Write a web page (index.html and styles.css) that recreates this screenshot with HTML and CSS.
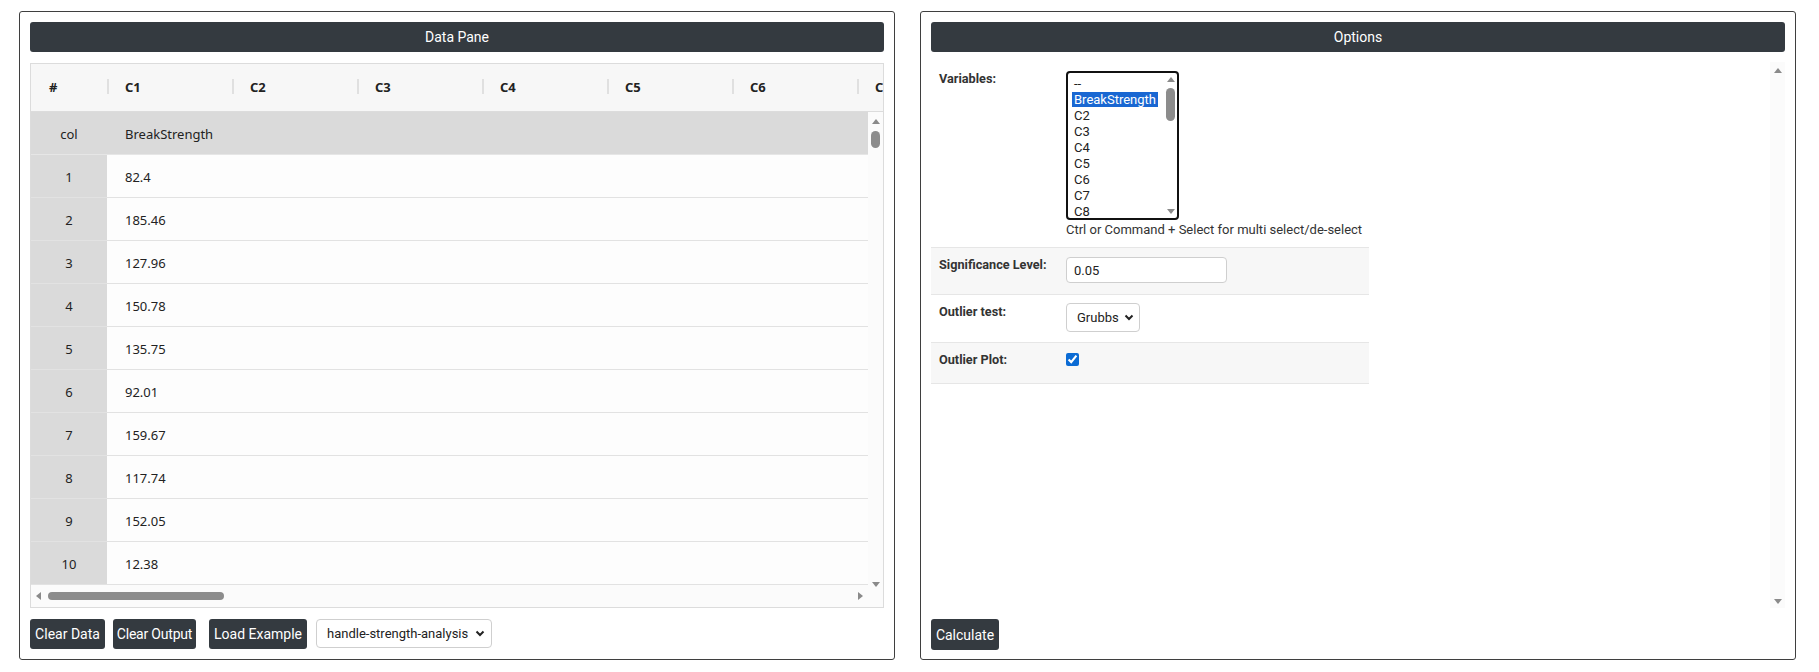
FILE: index.html
```html
<!DOCTYPE html>
<html lang="en">
<head>
<meta charset="utf-8">
<title>Outlier Test</title>
<link rel="stylesheet" href="styles.css">
</head>
<body>
<div class="page">
  <section class="panel">
    <div class="panel-head">Data Pane</div>
    <div class="grid-frame">
      <div class="grid-head">
        <div class="hcell idx">#</div>
        <div class="hcell">C1</div>
        <div class="hcell">C2</div>
        <div class="hcell">C3</div>
        <div class="hcell">C4</div>
        <div class="hcell">C5</div>
        <div class="hcell">C6</div>
        <div class="hcell">C7</div>
      </div>
      <div class="grid-body">
        <div class="rows">
          <div class="row labels"><div class="cell idx">col</div><div class="cell val">BreakStrength</div></div>
          <div class="row"><div class="cell idx">1</div><div class="cell val">82.4</div></div>
          <div class="row"><div class="cell idx">2</div><div class="cell val">185.46</div></div>
          <div class="row"><div class="cell idx">3</div><div class="cell val">127.96</div></div>
          <div class="row"><div class="cell idx">4</div><div class="cell val">150.78</div></div>
          <div class="row"><div class="cell idx">5</div><div class="cell val">135.75</div></div>
          <div class="row"><div class="cell idx">6</div><div class="cell val">92.01</div></div>
          <div class="row"><div class="cell idx">7</div><div class="cell val">159.67</div></div>
          <div class="row"><div class="cell idx">8</div><div class="cell val">117.74</div></div>
          <div class="row"><div class="cell idx">9</div><div class="cell val">152.05</div></div>
          <div class="row"><div class="cell idx">10</div><div class="cell val">12.38</div></div>
        </div>
        <div class="vbar">
          <span class="arr up"></span>
          <span class="vthumb"></span>
          <span class="spacer"></span>
          <span class="arr down"></span>
        </div>
        <div class="hbar">
          <span class="arr left"></span>
          <span class="hthumb"></span>
          <span class="spacer"></span>
          <span class="arr right"></span>
        </div>
      </div>
    </div>
    <div class="panel-foot">
      <button class="btn b-data">Clear Data</button>
      <button class="btn b-out">Clear Output</button>
      <button class="btn b-ex">Load Example</button>
      <div class="select example">
        <span>handle-strength-analysis</span>
        <svg class="chev" width="10" height="7" viewBox="0 0 10 7"><polyline points="1.5,1.5 5,5 8.5,1.5" fill="none" stroke="#222" stroke-width="2"/></svg>
      </div>
    </div>
  </section>

  <section class="panel">
    <div class="panel-head">Options</div>
    <div class="options-scroll">
      <div class="options">
        <div class="form">
          <div class="frow">
            <div class="flabel">Variables:</div>
            <div class="fctrl vars">
              <div class="listbox" role="listbox">
                <div class="items">
                  <div class="opt">--</div>
                  <div class="opt"><span class="sel">BreakStrength</span></div>
                  <div class="opt">C2</div>
                  <div class="opt">C3</div>
                  <div class="opt">C4</div>
                  <div class="opt">C5</div>
                  <div class="opt">C6</div>
                  <div class="opt">C7</div>
                  <div class="opt">C8</div>
                </div>
                <div class="lbar">
                  <span class="arr up"></span>
                  <span class="lthumb"></span>
                  <span class="spacer"></span>
                  <span class="arr down"></span>
                </div>
              </div>
              <div class="help">Ctrl or Command + Select for multi select/de-select</div>
            </div>
          </div>
          <div class="frow alt">
            <div class="flabel">Significance Level:</div>
            <div class="fctrl sig">
              <div class="input">0.05</div>
            </div>
          </div>
          <div class="frow">
            <div class="flabel">Outlier test:</div>
            <div class="fctrl test">
              <div class="select grubbs">
                <span>Grubbs</span>
                <svg class="chev" width="10" height="7" viewBox="0 0 10 7"><polyline points="1.5,1.5 5,5 8.5,1.5" fill="none" stroke="#222" stroke-width="2"/></svg>
              </div>
            </div>
          </div>
          <div class="frow alt last">
            <div class="flabel">Outlier Plot:</div>
            <div class="fctrl plot">
              <input type="checkbox" class="check" checked>
            </div>
          </div>
        </div>
      </div>
      <div class="obar">
        <span class="arr up"></span>
        <span class="spacer"></span>
        <span class="arr down"></span>
      </div>
    </div>
    <div class="panel-foot">
      <button class="btn calc">Calculate</button>
    </div>
  </section>
</div>
</body>
</html>
```

FILE: styles.css
```css
* { box-sizing: border-box; }
html, body { margin: 0; padding: 0; background: #fff; }
body {
  font-family: Roboto, "Liberation Sans", Arial, sans-serif;
  color: #333;
}
.page {
  display: flex;
  gap: 25px;
  padding: 11px 23px 12px 19px;
  height: 672px;
}
.panel {
  flex: 1;
  min-width: 0;
  border: 1px solid #3f3f3f;
  border-radius: 3px;
  padding: 10px;
  display: flex;
  flex-direction: column;
  gap: 11px;
}
.panel-head {
  flex: none;
  height: 30px;
  background: #343a40;
  color: #fff;
  border-radius: 3px;
  font-size: 14px;
  display: flex;
  align-items: center;
  justify-content: center;
}

/* data grid */
.grid-frame {
  flex: 1;
  min-height: 0;
  border: 1px solid #dcdcdc;
  display: flex;
  flex-direction: column;
  font-family: "Noto Sans", "Open Sans", sans-serif;
  font-size: 13px;
  color: #222;
}
.grid-head {
  flex: none;
  height: 48px;
  background: #f7f7f7;
  border-bottom: 1px solid #dcdcdc;
  display: flex;
  overflow: hidden;
  font-weight: 700;
  padding-bottom: 2px;
}
.hcell {
  flex: none;
  width: 125px;
  display: flex;
  align-items: center;
  padding-left: 18px;
  background: linear-gradient(#e0e0e0, #e0e0e0) left center / 2px 15px no-repeat;
}
.hcell.idx {
  width: 76px;
  padding-left: 18px;
  background: none;
}
.grid-body {
  flex: 1;
  min-height: 0;
  display: grid;
  grid-template-columns: 1fr 15px;
  grid-template-rows: 1fr 22px;
}
.rows {
  overflow: hidden;
  background: #fdfdfd;
}
.row {
  display: flex;
  height: 43px;
}
.cell {
  display: flex;
  align-items: center;
  padding-top: 2px;
}
.cell.idx {
  flex: none;
  width: 76px;
  justify-content: center;
  background: #dadada;
  border-bottom: 1px solid #e2e2e2;
}
.cell.val {
  flex: 1;
  padding-left: 18px;
  background: #fdfdfd;
  border-bottom: 1px solid #e2e2e2;
}
.row.labels .cell { background: #dadada; border-bottom: 1px solid #e6e6e6; }

.arr { flex: none; width: 0; height: 0; display: block; }
.arr.up { border-left: 4px solid transparent; border-right: 4px solid transparent; border-bottom: 5px solid #8a8a8a; }
.arr.down { border-left: 4px solid transparent; border-right: 4px solid transparent; border-top: 5px solid #8a8a8a; }
.arr.left { border-top: 4px solid transparent; border-bottom: 4px solid transparent; border-right: 5px solid #8a8a8a; }
.arr.right { border-top: 4px solid transparent; border-bottom: 4px solid transparent; border-left: 5px solid #8a8a8a; }
.spacer { flex: 1; }

.vbar {
  grid-column: 2;
  grid-row: 1 / 3;
  display: flex;
  flex-direction: column;
  align-items: center;
  padding: 7px 0 20px;
  background: #fbfbfb;
}
.vthumb {
  margin-top: 7px;
  width: 9px;
  height: 17px;
  border-radius: 5px;
  background: #8c8c8c;
}
.hbar {
  grid-column: 1;
  grid-row: 2;
  display: flex;
  align-items: center;
  padding: 0 5px 0 5px;
  background: #fbfbfb;
}
.hthumb {
  margin-left: 7px;
  width: 176px;
  height: 8px;
  border-radius: 4px;
  background: #8c8c8c;
}

/* footer */
.panel-foot {
  flex: none;
  height: 30px;
  display: flex;
  align-items: stretch;
  gap: 8px;
}
.btn {
  border: none;
  border-radius: 3px;
  background: #343a40;
  color: #fff;
  font-family: Roboto, "Liberation Sans", Arial, sans-serif;
  font-size: 14px;
  padding: 0;
  height: 30px;
  text-align: center;
  white-space: nowrap;
}
.b-data { width: 75px; }
.b-out { width: 83px; letter-spacing: -0.2px; }
.b-ex { width: 98px; margin-left: 5px; }
.select {
  display: flex;
  align-items: center;
  justify-content: space-between;
  border: 1px solid #cfcfcf;
  border-radius: 4px;
  background: #fff;
  font-size: 13px;
  color: #222;
  padding: 0 6px 0 10px;
}
.select.example {
  width: 176px;
  height: 29px;
  margin-left: 1px;
}
.chev { flex: none; }

/* options */
.options-scroll {
  flex: 1;
  min-height: 0;
  display: flex;
  margin-top: -1px;
}
.options { flex: 1; min-width: 0; }
.form { width: 438px; font-size: 13px; }
.frow {
  display: grid;
  grid-template-columns: 135px 1fr;
}
.frow + .frow { border-top: 1px solid #e6e6e6; }
.frow.last { border-bottom: 1px solid #e6e6e6; }
.frow.alt { background: #f7f7f7; }
.flabel {
  padding: 10px 8px 0;
  font-weight: 700;
  font-size: 12.7px;
  line-height: 14px;
  color: #333;
}
.fctrl.vars { padding: 9px 0 9px; }
.fctrl.sig { padding: 9px 0 11px; }
.fctrl.test { padding: 8px 0 10px; }
.fctrl.plot { padding: 10px 0 17px; height: 40px; }

.listbox {
  width: 113px;
  height: 149px;
  border: 2px solid #111;
  border-radius: 4px;
  background: #fff;
  display: flex;
  overflow: hidden;
}
.items {
  flex: 1;
  padding: 3px 0 0 4px;
  font-size: 13px;
  color: #222;
  overflow: hidden;
}
.opt {
  height: 16px;
  line-height: 16px;
  white-space: nowrap;
  padding-left: 2px;
}
.sel {
  background: #1967d2;
  color: #fff;
  display: inline-block;
  margin-left: -2px;
  padding: 0 2px;
  line-height: 15px;
}
.lbar {
  flex: none;
  width: 13px;
  display: flex;
  flex-direction: column;
  align-items: center;
  padding: 4px 0 4px;
}
.lthumb {
  margin-top: 6px;
  width: 9px;
  height: 33px;
  border-radius: 5px;
  background: #8c8c8c;
}
.help {
  margin-top: 2px;
  line-height: 16px;
  font-size: 13px;
  color: #333;
  white-space: nowrap;
}
.input {
  width: 161px;
  height: 26px;
  border: 1px solid #cfcfcf;
  border-radius: 4px;
  background: #fff;
  font-size: 13px;
  color: #222;
  padding-left: 7px;
  display: flex;
  align-items: center;
}
.select.grubbs {
  width: 74px;
  height: 29px;
  padding: 0 5px 0 10px;
}
.check {
  margin: 0;
  width: 13px;
  height: 13px;
  accent-color: #0b6bd4;
  display: block;
}
.obar {
  flex: none;
  width: 15px;
  display: flex;
  flex-direction: column;
  align-items: center;
  padding: 6px 0 4px;
  background: #fbfbfb;
}
.btn.calc { width: 68px; height: 31px; padding: 0; }
```
